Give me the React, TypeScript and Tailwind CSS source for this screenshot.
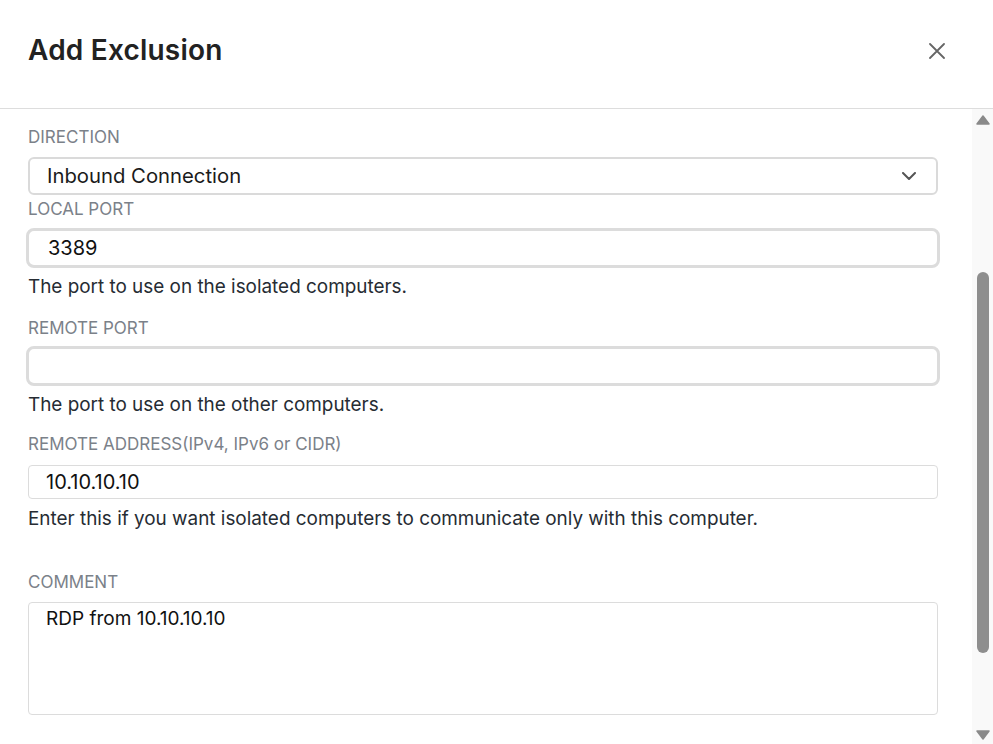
import React from 'react';

const font = { fontFamily: 'Inter, "Noto Sans", sans-serif' };

const Label: React.FC<{ children: React.ReactNode; className?: string }> = ({ children, className }) => (
  <div className={`text-[17px] leading-[20px] text-[#7b8189] ${className ?? ''}`}>{children}</div>
);

const Help: React.FC<{ children: React.ReactNode; className?: string }> = ({ children, className }) => (
  <p className={`text-[18.9px] leading-[22px] text-[#262c33] ${className ?? ''}`}>{children}</p>
);

export default function App() {
  return (
    <div className="w-[993px] h-[744px] bg-white flex flex-col overflow-hidden" style={font}>
      <header className="h-[109px] shrink-0 border-b border-[#dddddd] flex items-start justify-between pl-[28px] pr-[48px]">
        <h1 className="pt-[33px] text-[28px] leading-[34px] font-semibold tracking-[0.2px] text-[#222]">Add Exclusion</h1>
        <button className="mt-[43px] w-4 h-4 text-[#666]">
          <svg viewBox="0 0 16 16" className="w-4 h-4" fill="none" stroke="currentColor" strokeWidth="1.8" strokeLinecap="round">
            <path d="M1 1L15 15M15 1L1 15" />
          </svg>
        </button>
      </header>

      <div className="flex flex-1 min-h-0">
        <div className="flex-1 pl-[28px] pr-[34px] flex flex-col">
          <Label className="mt-[18px]">DIRECTION</Label>
          <div className="mt-[10px] h-[38px] border-2 border-[#dadada] rounded-[6px] flex items-center justify-between pl-[17px] pr-[20px]">
            <span className="text-[20.3px] text-[#1a1a1a]">Inbound Connection</span>
            <svg viewBox="0 0 14 8" className="w-[14px] h-[8px] text-[#555]" fill="none" stroke="currentColor" strokeWidth="2" strokeLinecap="round" strokeLinejoin="round">
              <path d="M1 1L7 7L13 1" />
            </svg>
          </div>

          <Label className="mt-[4px]">LOCAL PORT</Label>
          <div className="mt-[9px] -mx-[2px] h-[40px] border-[3px] border-[#dcdcdc] rounded-[8px] flex items-center pl-[19px]">
            <span className="text-[20px] text-[#111]">3389</span>
          </div>
          <Help className="mt-[8px]">The port to use on the isolated computers.</Help>

          <Label className="mt-[20px]">REMOTE PORT</Label>
          <div className="mt-[8px] -mx-[2px] h-[40px] border-[3px] border-[#dcdcdc] rounded-[8px]" />
          <Help className="mt-[8px]">The port to use on the other computers.</Help>

          <Label className="mt-[18px]">REMOTE ADDRESS(IPv4, IPv6 or CIDR)</Label>
          <div className="mt-[11px] h-[34px] border border-[#dcdcdc] rounded-[4px] flex items-center pl-[17px]">
            <span className="text-[20px] text-[#111]">10.10.10.10</span>
          </div>
          <Help className="mt-[9px]">Enter this if you want isolated computers to communicate only with this computer.</Help>

          <Label className="mt-[42px]">COMMENT</Label>
          <div className="mt-[10px] h-[113px] border border-[#dcdcdc] rounded-[4px] pl-[17px] pt-[4px]">
            <span className="text-[19px] leading-[24px] text-[#111]">RDP from 10.10.10.10</span>
          </div>
        </div>

        <div className="w-[21px] shrink-0 bg-[#f9f9f9] flex flex-col items-center">
          <svg viewBox="0 0 14 10" className="mt-[6px] w-[14px] h-[10px] text-[#8a8a8a]" fill="currentColor" stroke="currentColor" strokeWidth="1.5" strokeLinejoin="round">
            <path d="M7 1L13 9H1Z" />
          </svg>
          <div className="mt-[147px] w-[12px] h-[381px] rounded-full bg-[#8e8e8e]" />
          <div className="flex-1" />
          <svg viewBox="0 0 14 10" className="mb-[4px] w-[14px] h-[10px] text-[#8a8a8a]" fill="currentColor" stroke="currentColor" strokeWidth="1.5" strokeLinejoin="round">
            <path d="M1 1H13L7 9Z" />
          </svg>
        </div>
      </div>
    </div>
  );
}
